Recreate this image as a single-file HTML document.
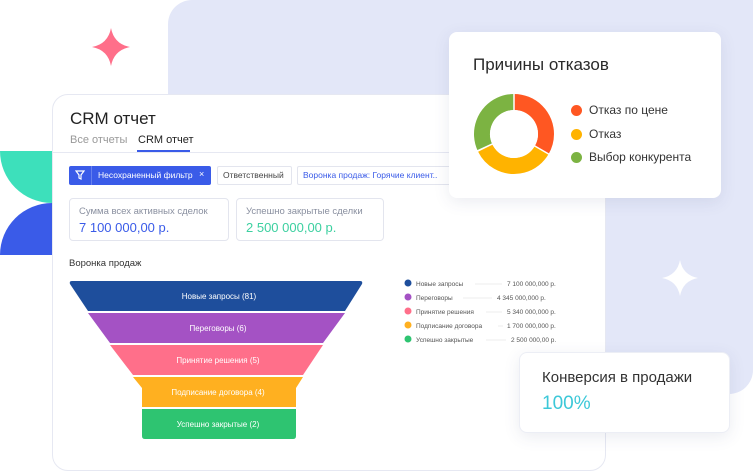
<!DOCTYPE html>
<html><head><meta charset="utf-8"><style>
*{margin:0;padding:0;box-sizing:border-box}
body{width:753px;height:470px;overflow:hidden;background:#fff;position:relative;font-family:"Liberation Sans",sans-serif}
.a{position:absolute}
.lav{left:168px;top:0;width:585px;height:394px;background:#e3e7f8;border-radius:24px 0 24px 0}
.card{left:52px;top:94px;width:554px;height:377px;background:#fff;border:1px solid #e6e8f2;border-radius:16px;overflow:hidden}
.t{position:absolute;white-space:nowrap}
.sh{box-shadow:0 4px 16px rgba(60,70,120,.10)}
</style></head><body>
<div class="a lav"></div>
<div class="a" style="left:0;top:151px;width:52px;height:52px;background:#3de0bb;border-radius:0 0 0 52px"></div>
<div class="a" style="left:0;top:203px;width:52px;height:52px;background:#3a5be8;border-radius:52px 0 0 0"></div>
<svg class="a" style="left:92px;top:28px" width="38" height="38" viewBox="0 0 38 38"><path d="M19 0 Q22 16 38 19 Q22 22 19 38 Q16 22 0 19 Q16 16 19 0Z" fill="#ff6f8a"/></svg>
<svg class="a" style="left:662px;top:260px" width="36" height="36" viewBox="0 0 38 38"><path d="M19 0 Q22 16 38 19 Q22 22 19 38 Q16 22 0 19 Q16 16 19 0Z" fill="#fff"/></svg>

<div class="a card">
 <div class="t" style="left:17px;top:14px;font-size:17px;color:#222">CRM отчет</div>
 <div class="t" style="left:17px;top:39px;font-size:11px;color:#999">Все отчеты</div>
 <div class="t" style="left:85px;top:39px;font-size:11px;color:#222">CRM отчет</div>
 <div class="a" style="left:84px;top:55px;width:53px;height:2px;background:#3a5be8"></div>
 <div class="a" style="left:0;top:57px;width:554px;height:1px;background:#e6e8f2"></div>
 <div class="a" style="left:16px;top:71px;width:142px;height:19px;background:#3a5be8;border-radius:2px"></div>
 <div class="a" style="left:38px;top:71px;width:1px;height:19px;background:#6680ee"></div>
 <svg class="a" style="left:22px;top:75px" width="10" height="11" viewBox="0 0 10 11"><path d="M1 1H9L6 5V9L4 8V5Z" fill="none" stroke="#fff" stroke-width="1.2"/></svg>
 <div class="t" style="left:45px;top:75px;font-size:8.5px;color:#fff">Несохраненный фильтр</div>
 <div class="t" style="left:146px;top:74px;font-size:9px;color:#fff">×</div>
 <div class="a" style="left:164px;top:71px;width:75px;height:19px;border:1px solid #e3e5ee;border-radius:2px"></div>
 <div class="t" style="left:170px;top:75px;font-size:8.5px;color:#444">Ответственный</div>
 <div class="a" style="left:244px;top:71px;width:320px;height:19px;border:1px solid #e3e5ee;border-radius:2px"></div>
 <div class="t" style="left:250px;top:75px;font-size:8.5px;color:#3a5be8">Воронка продаж: Горячие клиент..</div>
 <div class="a" style="left:16px;top:103px;width:160px;height:43px;border:1px solid #e3e5ee;border-radius:4px"></div>
 <div class="t" style="left:26px;top:111px;font-size:9.5px;color:#8a90a0">Сумма всех активных сделок</div>
 <div class="t" style="left:26px;top:125px;font-size:13px;color:#3a5be8">7 100 000,00 р.</div>
 <div class="a" style="left:183px;top:103px;width:148px;height:43px;border:1px solid #e3e5ee;border-radius:4px"></div>
 <div class="t" style="left:193px;top:111px;font-size:9.5px;color:#8a90a0">Успешно закрытые сделки</div>
 <div class="t" style="left:193px;top:125px;font-size:13px;color:#3cd0a0">2 500 000,00 р.</div>
 <div class="t" style="left:16px;top:163px;font-size:9.5px;color:#333">Воронка продаж</div>
</div>

<svg class="a" style="left:0;top:0" width="753" height="470">
 <path d="M72 281H360Q363 281 362 284L345 311H88L70 284Q69 281 72 281Z" fill="#1e4e9c"/>
 <path d="M88 313H345L323 343H110Z" fill="#a452c4"/>
 <path d="M110 345H323L303 375H133Z" fill="#ff6f8a"/>
 <path d="M133 377H303L296 388V407H142V388Z" fill="#ffb020"/>
 <path d="M142 409H296V436Q296 439 293 439H145Q142 439 142 436Z" fill="#2ec471"/>
 <g font-family="Liberation Sans,sans-serif" font-size="8" fill="#fff" text-anchor="middle">
  <text x="219" y="299">Новые запросы  (81)</text>
  <text x="218" y="331">Переговоры  (6)</text>
  <text x="218" y="363">Принятие решения  (5)</text>
  <text x="218" y="395">Подписание договора  (4)</text>
  <text x="218" y="427">Успешно закрытые  (2)</text>
 </g>
 <g font-family="Liberation Sans,sans-serif" font-size="6.5" fill="#555">
  <circle cx="408" cy="283" r="3.5" fill="#1e4e9c"/><text x="416" y="286">Новые запросы</text><line x1="475" y1="284" x2="502" y2="284" stroke="#eee"/><text x="507" y="286">7 100 000,000 р.</text>
  <circle cx="408" cy="297" r="3.5" fill="#a452c4"/><text x="416" y="300">Переговоры</text><line x1="463" y1="298" x2="492" y2="298" stroke="#eee"/><text x="497" y="300">4 345 000,000 р.</text>
  <circle cx="408" cy="311" r="3.5" fill="#ff6f8a"/><text x="416" y="314">Принятие решения</text><line x1="486" y1="312" x2="502" y2="312" stroke="#eee"/><text x="507" y="314">5 340 000,000 р.</text>
  <circle cx="408" cy="325" r="3.5" fill="#ffb020"/><text x="416" y="328">Подписание договора</text><line x1="498" y1="326" x2="503" y2="326" stroke="#eee"/><text x="507" y="328">1 700 000,000 р.</text>
  <circle cx="408" cy="339" r="3.5" fill="#2ec471"/><text x="416" y="342">Успешно закрытые</text><line x1="486" y1="340" x2="506" y2="340" stroke="#eee"/><text x="511" y="342">2 500 000,00 р.</text>
 </g>
</svg>

<div class="a sh" style="left:449px;top:32px;width:272px;height:166px;background:#fff;border-radius:8px"></div>
<div class="t" style="left:473px;top:55px;font-size:17px;color:#2a2a2a">Причины отказов</div>
<svg class="a" style="left:473px;top:93px" width="82" height="82" viewBox="-41 -41 82 82">
 <g fill="none" stroke-width="16">
  <circle r="32" stroke="#ff5722" stroke-dasharray="67 400" transform="rotate(-90)"/>
  <circle r="32" stroke="#ffb300" stroke-dasharray="69 400" transform="rotate(30)"/>
  <circle r="32" stroke="#7cb342" stroke-dasharray="64 400" transform="rotate(155)"/>
 </g>
 <g stroke="#fff" stroke-width="1.5"><line x1="0" y1="0" x2="0" y2="-41"/><line x1="0" y1="0" x2="35.5" y2="20.5"/><line x1="0" y1="0" x2="-37" y2="17"/></g>
 <circle r="24" fill="#fff"/>
</svg>
<div class="a" style="left:571px;top:105px;width:11px;height:11px;border-radius:50%;background:#ff5722"></div>
<div class="t" style="left:589px;top:103px;font-size:12px;color:#333">Отказ по цене</div>
<div class="a" style="left:571px;top:129px;width:11px;height:11px;border-radius:50%;background:#ffb300"></div>
<div class="t" style="left:589px;top:127px;font-size:12px;color:#333">Отказ</div>
<div class="a" style="left:571px;top:152px;width:11px;height:11px;border-radius:50%;background:#7cb342"></div>
<div class="t" style="left:589px;top:150px;font-size:12px;color:#333">Выбор конкурента</div>

<div class="a sh" style="left:519px;top:352px;width:211px;height:81px;background:#fff;border-radius:8px;border:1px solid #eceef5"></div>
<div class="t" style="left:542px;top:369px;font-size:15px;color:#333">Конверсия в продажи</div>
<div class="t" style="left:542px;top:393px;font-size:19px;color:#3cc8d8">100%</div>
</body></html>
